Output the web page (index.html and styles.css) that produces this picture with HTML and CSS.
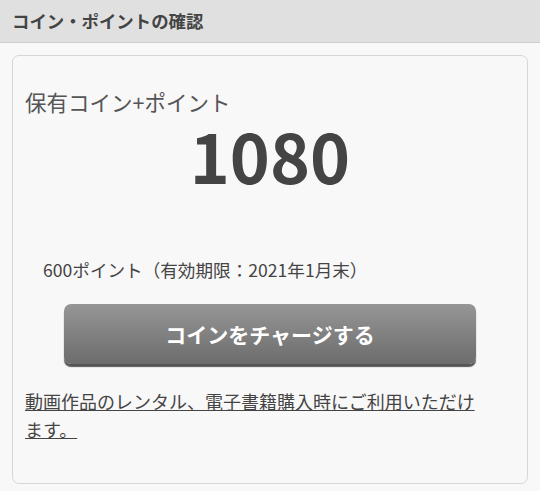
FILE: index.html
```html
<!DOCTYPE html>
<html lang="ja">
<head>
<meta charset="utf-8">
<link rel="stylesheet" href="styles.css">
</head>
<body>
<header class="page-head"><h1 class="page-title">コイン・ポイントの確認</h1></header>
<main class="content">
  <section class="card">
    <p class="label">保有コイン+ポイント</p>
    <p class="total">1080</p>
    <p class="points">600ポイント（有効期限：2021年1月末）</p>
    <div class="btn-wrap"><a class="charge-btn" href="#">コインをチャージする</a></div>
    <p class="note"><a class="note-link" href="#">動画作品のレンタル、電子書籍購入時にご利用いただけます。</a></p>
  </section>
</main>
</body>
</html>
```
FILE: styles.css
```css
html, body {
  margin: 0;
  padding: 0;
  background: #f8f8f8;
  font-family: "Noto Sans CJK JP", "Noto Sans", sans-serif;
  color: #444;
}
.page-head {
  height: 42px;
  background: #e0e0e0;
  border-bottom: 1px solid #cfcfcf;
  display: flex;
  align-items: center;
  padding: 0 12px;
}
.page-title {
  margin: 0;
  font-size: 17.4px;
  font-weight: bold;
  color: #444;
  line-height: 1;
}
.content {
  padding: 12px 12px 0 12px;
}
.card {
  border: 1px solid #d6d6d6;
  border-radius: 7px;
  background: #f8f8f8;
  padding: 31px 12px 39px 12px;
  height: 429px;
  box-sizing: border-box;
}
.label {
  margin: 0;
  font-size: 21.5px;
  line-height: 29px;
  color: #555;
  font-weight: normal;
}
.total {
  margin: 4px 0 0 0;
  font-size: 68px;
  line-height: 70px;
  font-weight: bold;
  text-align: center;
  color: #444;
}
.points {
  margin: 67px 0 0 18px;
  font-size: 17.6px;
  line-height: 25px;
  color: #444;
}
.btn-wrap {
  margin-top: 22px;
  display: flex;
  justify-content: center;
}
.charge-btn {
  display: flex;
  align-items: center;
  justify-content: center;
  width: 412px;
  height: 60px;
  border-radius: 7px;
  background: linear-gradient(#969696, #6c6c6c);
  box-shadow: 0 3px 1px #555;
  color: #fff;
  font-size: 21px;
  font-weight: bold;
  text-decoration: none;
}
.note {
  margin: 23px 30px 0 0;
  font-size: 18px;
  line-height: 28px;
}
.note-link {
  color: #444;
  text-decoration: underline;
}
```
